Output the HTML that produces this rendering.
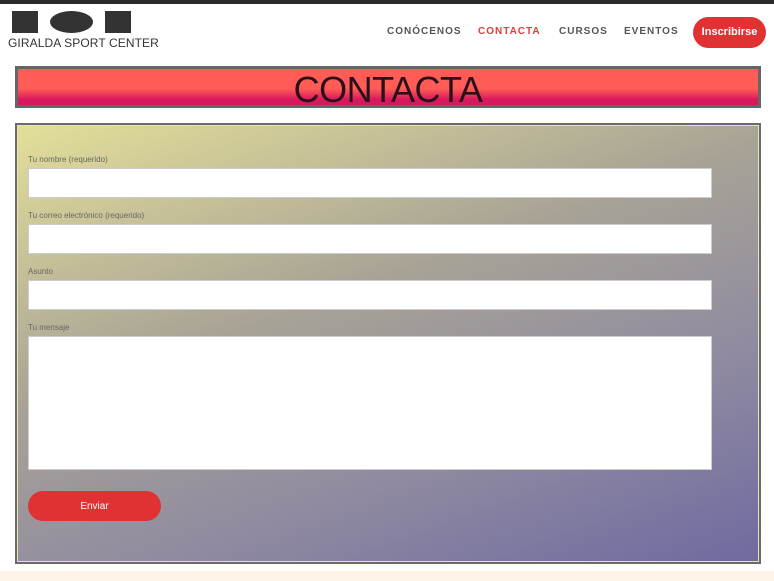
<!DOCTYPE html>
<html><head><meta charset="utf-8"><style>
*{margin:0;padding:0;box-sizing:border-box}
body{width:774px;height:581px;background:#fff;position:relative;overflow:hidden;font-family:"Liberation Sans",sans-serif}
.abs{position:absolute}
.top{left:0;top:0;width:774px;height:4px;background:#2b2b2b}
.blk{background:#333;top:11px;height:22px}
.logo{left:8px;top:36px;font-size:12px;color:#333;letter-spacing:.1px}
.nav{top:26px;font-size:10px;letter-spacing:1px;color:#555;font-weight:bold}
.ins{left:693px;top:17px;width:73px;height:31px;border-radius:16px;background:#e03232;color:#fff;font-weight:bold;font-size:11px;text-align:center;line-height:31px}
.ban{left:15px;top:66px;width:746px;height:42px;border:3px solid #666;background:linear-gradient(#ff5b57 0,#ff5b57 55%,#d8185d 85%,#d8185d 100%)}
.ban div{position:absolute;left:0;right:0;top:0px;text-align:center;font-size:36px;color:#2a1018;letter-spacing:-0.5px}
.form{left:15px;top:123px;width:746px;height:441px;border:2px solid #6a6a74;outline:1px solid #e8e4a8;outline-offset:-3px;background:linear-gradient(160deg,#e3df99 0%,#a8a396 40%,#8f8aa0 70%,#6f6aa0 100%)}
.lbl{left:28px;font-size:8px;color:#666}
.in{left:28px;width:684px;height:30px;background:#fff;border:1px solid #ccc}
.btn{left:28px;top:491px;width:133px;height:30px;border-radius:15px;background:#e03232;color:#fff;font-size:10px;text-align:center;line-height:31px}
.foot{left:0;top:571px;width:774px;height:10px;background:#fdf3e6}
</style></head><body>
<div class="abs top"></div>
<div class="abs blk" style="left:12px;width:26px"></div>
<div class="abs blk" style="left:50px;width:43px;border-radius:50%/50%"></div>
<div class="abs blk" style="left:105px;width:26px"></div>
<div class="abs logo">GIRALDA SPORT CENTER</div>
<div class="abs nav" style="left:387px">CONÓCENOS</div>
<div class="abs nav" style="left:478px;color:#e83a3a">CONTACTA</div>
<div class="abs nav" style="left:559px">CURSOS</div>
<div class="abs nav" style="left:624px">EVENTOS</div>
<div class="abs ins">Inscribirse</div>
<div class="abs ban"><div>CONTACTA</div></div>
<div class="abs form"></div>
<div class="abs lbl" style="top:155px">Tu nombre (requerido)</div>
<div class="abs in" style="top:168px"></div>
<div class="abs lbl" style="top:211px">Tu correo electrónico (requerido)</div>
<div class="abs in" style="top:224px"></div>
<div class="abs lbl" style="top:267px">Asunto</div>
<div class="abs in" style="top:280px"></div>
<div class="abs lbl" style="top:323px">Tu mensaje</div>
<div class="abs in" style="top:336px;height:134px"></div>
<div class="abs btn">Enviar</div>
<div class="abs foot"></div>
</body></html>
